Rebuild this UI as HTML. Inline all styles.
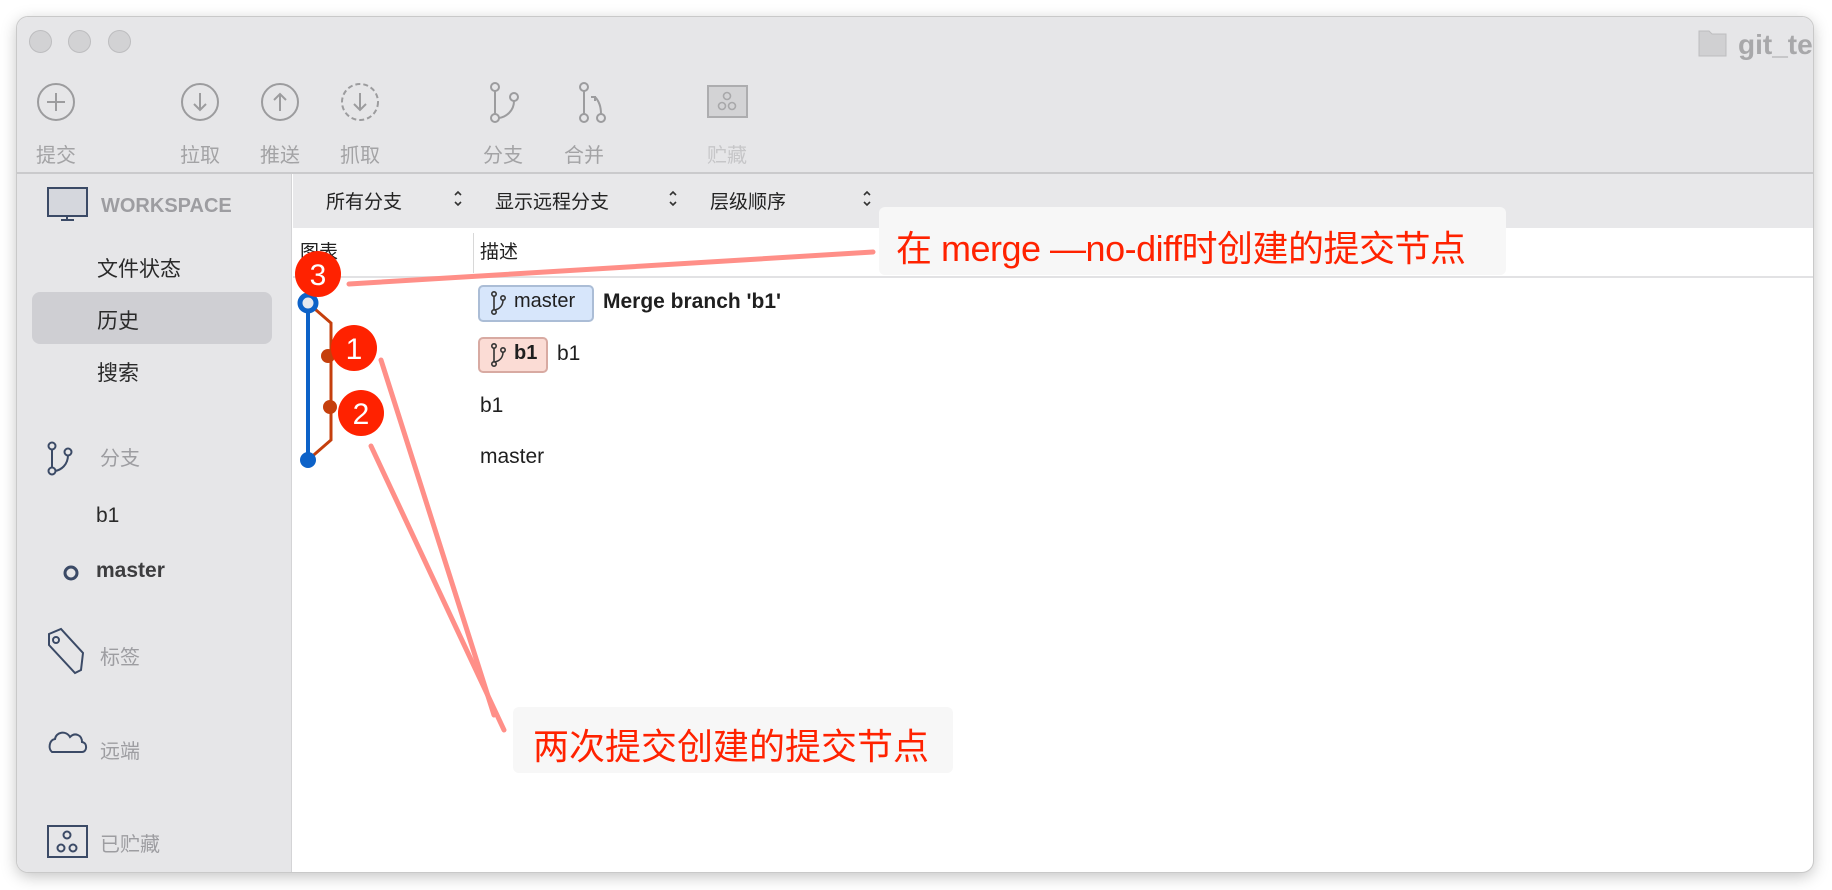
<!DOCTYPE html>
<html><head><meta charset="utf-8"><style>
*{margin:0;padding:0;box-sizing:border-box}
body{width:1832px;height:890px;background:#fff;position:relative;overflow:hidden;font-family:"Liberation Sans","Noto Sans CJK SC",sans-serif}
.win{position:absolute;left:17px;top:17px;width:1796px;height:855px;border-radius:11px;overflow:hidden;background:#fff;box-shadow:0 0 0 1px #c9c9c9,0 4px 16px rgba(0,0,0,.25)}
.abs{position:absolute}
.tb{left:0;top:0;width:1796px;height:157px;background:#e6e6e8;border-bottom:2px solid #cacacc}
.tl{width:23px;height:23px;border-radius:50%;background:#d2d2d4;border:1px solid #bdbdbf;top:13px}
.lab{font-size:20px;color:#a3a3a5;top:122px;transform:translateX(-50%);white-space:nowrap}
.side{left:0;top:157px;width:275px;height:698px;background:#e6e6e8;border-right:1px solid #d4d4d6}
.st{font-size:21px;color:#2a2a2a;white-space:nowrap}
.sg{font-size:20px;color:#9d9da1;font-weight:bold;white-space:nowrap}
.fbar{left:276px;top:157px;width:1520px;height:54px;background:#e8e8ea}
.ft{font-size:19px;color:#222;top:20px}
.row{font-size:21px;color:#1f1f1f;white-space:nowrap}
.red{color:#ff2200;white-space:nowrap}
</style></head><body>
<div class="win">
  <div class="abs tb"></div>
  <div class="abs tl" style="left:12px"></div>
  <div class="abs tl" style="left:51px"></div>
  <div class="abs tl" style="left:91px"></div>
  <svg class="abs" style="left:0;top:0" width="1796" height="157">
    <g fill="none" stroke="#9c9c9e" stroke-width="2">
      <circle cx="39" cy="85" r="18"/><path d="M39 76v18M30 85h18"/>
      <circle cx="183" cy="85" r="18"/><path d="M183 76v17M177 87l6 6 6-6"/>
      <circle cx="263" cy="85" r="18"/><path d="M263 94v-17M257 83l6-6 6 6"/>
      <circle cx="343" cy="85" r="18" stroke-dasharray="5 3"/><path d="M343 76v17M337 87l6 6 6-6"/>
      <circle cx="478" cy="70" r="4"/><circle cx="478" cy="101" r="4"/><circle cx="497" cy="80" r="4"/>
      <path d="M478 74v23M497 84c0 10-8 16-15 17"/>
      <circle cx="567" cy="70" r="4"/><circle cx="567" cy="101" r="4"/><circle cx="584" cy="101" r="4"/>
      <path d="M567 74v23M584 97c0-8-2-13-6-17M574 80l4 0 0 4"/>
    </g>
    <rect x="691" y="69" width="39" height="31" fill="#d3d3d5" stroke="#adadaf" stroke-width="2"/>
    <g fill="none" stroke="#a8a8aa" stroke-width="1.6"><circle cx="710" cy="79" r="3.5"/><circle cx="705" cy="89" r="3.5"/><circle cx="715" cy="89" r="3.5"/></g>
    <path d="M1682 14h10l3 3h14v22h-27z" fill="#d0d0d2" stroke="#bdbdbf"/>
  </svg>
  <div class="abs" style="left:1721px;top:12px;font-size:28px;font-weight:bold;color:#a8a8aa">git_te</div>
  <div class="abs lab" style="left:39px">提交</div>
  <div class="abs lab" style="left:183px">拉取</div>
  <div class="abs lab" style="left:263px">推送</div>
  <div class="abs lab" style="left:343px">抓取</div>
  <div class="abs lab" style="left:486px">分支</div>
  <div class="abs lab" style="left:567px">合并</div>
  <div class="abs lab" style="left:710px;color:#c6c6c8">贮藏</div>

  <div class="abs side"></div>
  <div class="abs" style="left:15px;top:275px;width:240px;height:52px;background:#cfcfd3;border-radius:8px"></div>
  <svg class="abs" style="left:0;top:157px" width="275" height="698">
    <g fill="none" stroke="#3b4a66" stroke-width="2">
      <rect x="31" y="14" width="39" height="28" fill="#d5d7dd"/><path d="M44 46h13M50 42v4"/>
      <circle cx="35" cy="272" r="3.5"/><circle cx="35" cy="297" r="3.5"/><circle cx="51" cy="278" r="3.5"/><path d="M35 275v19M51 281c0 10-7 15-13 16"/>
      <circle cx="54" cy="399" r="6" stroke-width="3"/>
      <path d="M32 466l0-6 12-5 22 24-2 17-6 3-26-28z"/><circle cx="39" cy="466" r="3"/>
      <path d="M35 578h30c5 0 6-9 0-10c0-7-7-10-12-5c-4-7-14-5-15 2c-6 1-7 10-3 13z"/>
      <rect x="31" y="652" width="39" height="31"/><circle cx="50" cy="661" r="3.5"/><circle cx="44" cy="674" r="3.5"/><circle cx="56" cy="674" r="3.5"/>
    </g>
  </svg>
  <div class="abs sg" style="left:84px;top:178px">WORKSPACE</div>
  <div class="abs st" style="left:80px;top:236px">文件状态</div>
  <div class="abs st" style="left:80px;top:288px">历史</div>
  <div class="abs st" style="left:80px;top:340px">搜索</div>
  <div class="abs sg" style="left:83px;top:425px;font-weight:normal">分支</div>
  <div class="abs st" style="left:79px;top:487px">b1</div>
  <div class="abs st" style="left:79px;top:542px;font-weight:bold;color:#3d3d3f">master</div>
  <div class="abs sg" style="left:83px;top:624px;font-weight:normal">标签</div>
  <div class="abs sg" style="left:83px;top:718px;font-weight:normal">远端</div>
  <div class="abs sg" style="left:83px;top:811px;font-weight:normal">已贮藏</div>

  <div class="abs fbar"></div>
  <div class="abs ft" style="left:309px;top:170px">所有分支</div>
  <div class="abs ft" style="left:478px;top:170px">显示远程分支</div>
  <div class="abs ft" style="left:693px;top:170px">层级顺序</div>
  <svg class="abs" style="left:0;top:0" width="1796" height="855">
    <g fill="none" stroke="#333" stroke-width="1.6"><path d="M438 178l3-3 3 3M438 185l3 3 3-3M653 178l3-3 3 3M653 185l3 3 3-3M847 178l3-3 3 3M847 185l3 3 3-3"/></g>
  </svg>
  <div class="abs" style="left:276px;top:259px;width:1520px;height:2px;background:#e2e2e4"></div>
  <div class="abs" style="left:456px;top:216px;width:1px;height:40px;background:#d8d8d8"></div>
  <div class="abs" style="left:283px;top:220px;font-size:19px;color:#222">图表</div>
  <div class="abs" style="left:463px;top:220px;font-size:19px;color:#222">描述</div>

  <div class="abs" style="left:461px;top:268px;width:116px;height:37px;background:#d7e6fb;border:2px solid #abbdd6;border-radius:5px"></div>
  <div class="abs row" style="left:497px;top:273px;font-size:20px">master</div>
  <div class="abs row" style="left:586px;top:273px;font-weight:bold">Merge branch 'b1'</div>
  <div class="abs" style="left:461px;top:320px;width:70px;height:36px;background:#fbdcd5;border:2px solid #d8aaa2;border-radius:5px"></div>
  <div class="abs row" style="left:497px;top:325px;font-weight:bold;font-size:20px">b1</div>
  <div class="abs row" style="left:540px;top:325px">b1</div>
  <div class="abs row" style="left:463px;top:377px">b1</div>
  <div class="abs row" style="left:463px;top:428px">master</div>
  <svg class="abs" style="left:0;top:0" width="1796" height="855">
    <g fill="none" stroke="#333" stroke-width="1.6">
      <circle cx="477" cy="277" r="2.2"/><circle cx="477" cy="295" r="2.2"/><circle cx="486" cy="281" r="2.2"/><path d="M477 279v14M486 283c0 6-4 9-8 10"/>
      <circle cx="477" cy="329" r="2.2"/><circle cx="477" cy="347" r="2.2"/><circle cx="486" cy="333" r="2.2"/><path d="M477 331v14M486 335c0 6-4 9-8 10"/>
    </g>
    <path d="M291 286l23 20v117l-23 20" fill="none" stroke="#c53f0c" stroke-width="3"/>
    <path d="M291 286v157" stroke="#0d62c8" stroke-width="4"/>
    <circle cx="291" cy="286" r="8" fill="#e6e8ee" stroke="#0d62c8" stroke-width="5"/>
    <circle cx="291" cy="443" r="8" fill="#0d62c8"/>
    <circle cx="311" cy="339" r="7" fill="#c53f0c"/>
    <circle cx="313" cy="390" r="7" fill="#c53f0c"/>
  </svg>
</div>
<div class="abs" style="left:879px;top:207px;width:627px;height:68px;background:#f7f7f7;border-radius:6px"></div>
<div class="abs red" style="left:896px;top:220px;font-size:36px;letter-spacing:-0.5px">在 merge —no-diff时创建的提交节点</div>
<div class="abs" style="left:513px;top:707px;width:440px;height:66px;background:#f7f7f7;border-radius:6px"></div>
<div class="abs red" style="left:533px;top:718px;font-size:36px">两次提交创建的提交节点</div>
<svg class="abs" style="left:0;top:0" width="1832" height="890">
  <g stroke="#ff8f88" stroke-width="5" stroke-linecap="round">
    <path d="M349 284L873 252"/>
    <path d="M381 360L494 715"/>
    <path d="M371 446L504 730"/>
  </g>
  <g fill="#ff2200"><circle cx="318" cy="274" r="23"/><circle cx="354" cy="348" r="23"/><circle cx="361" cy="413" r="23"/></g>
  <g fill="#fff" font-size="30" font-family="Liberation Sans,sans-serif" text-anchor="middle"><text x="318" y="285">3</text><text x="354" y="359">1</text><text x="361" y="424">2</text></g>
</svg>
</body></html>
